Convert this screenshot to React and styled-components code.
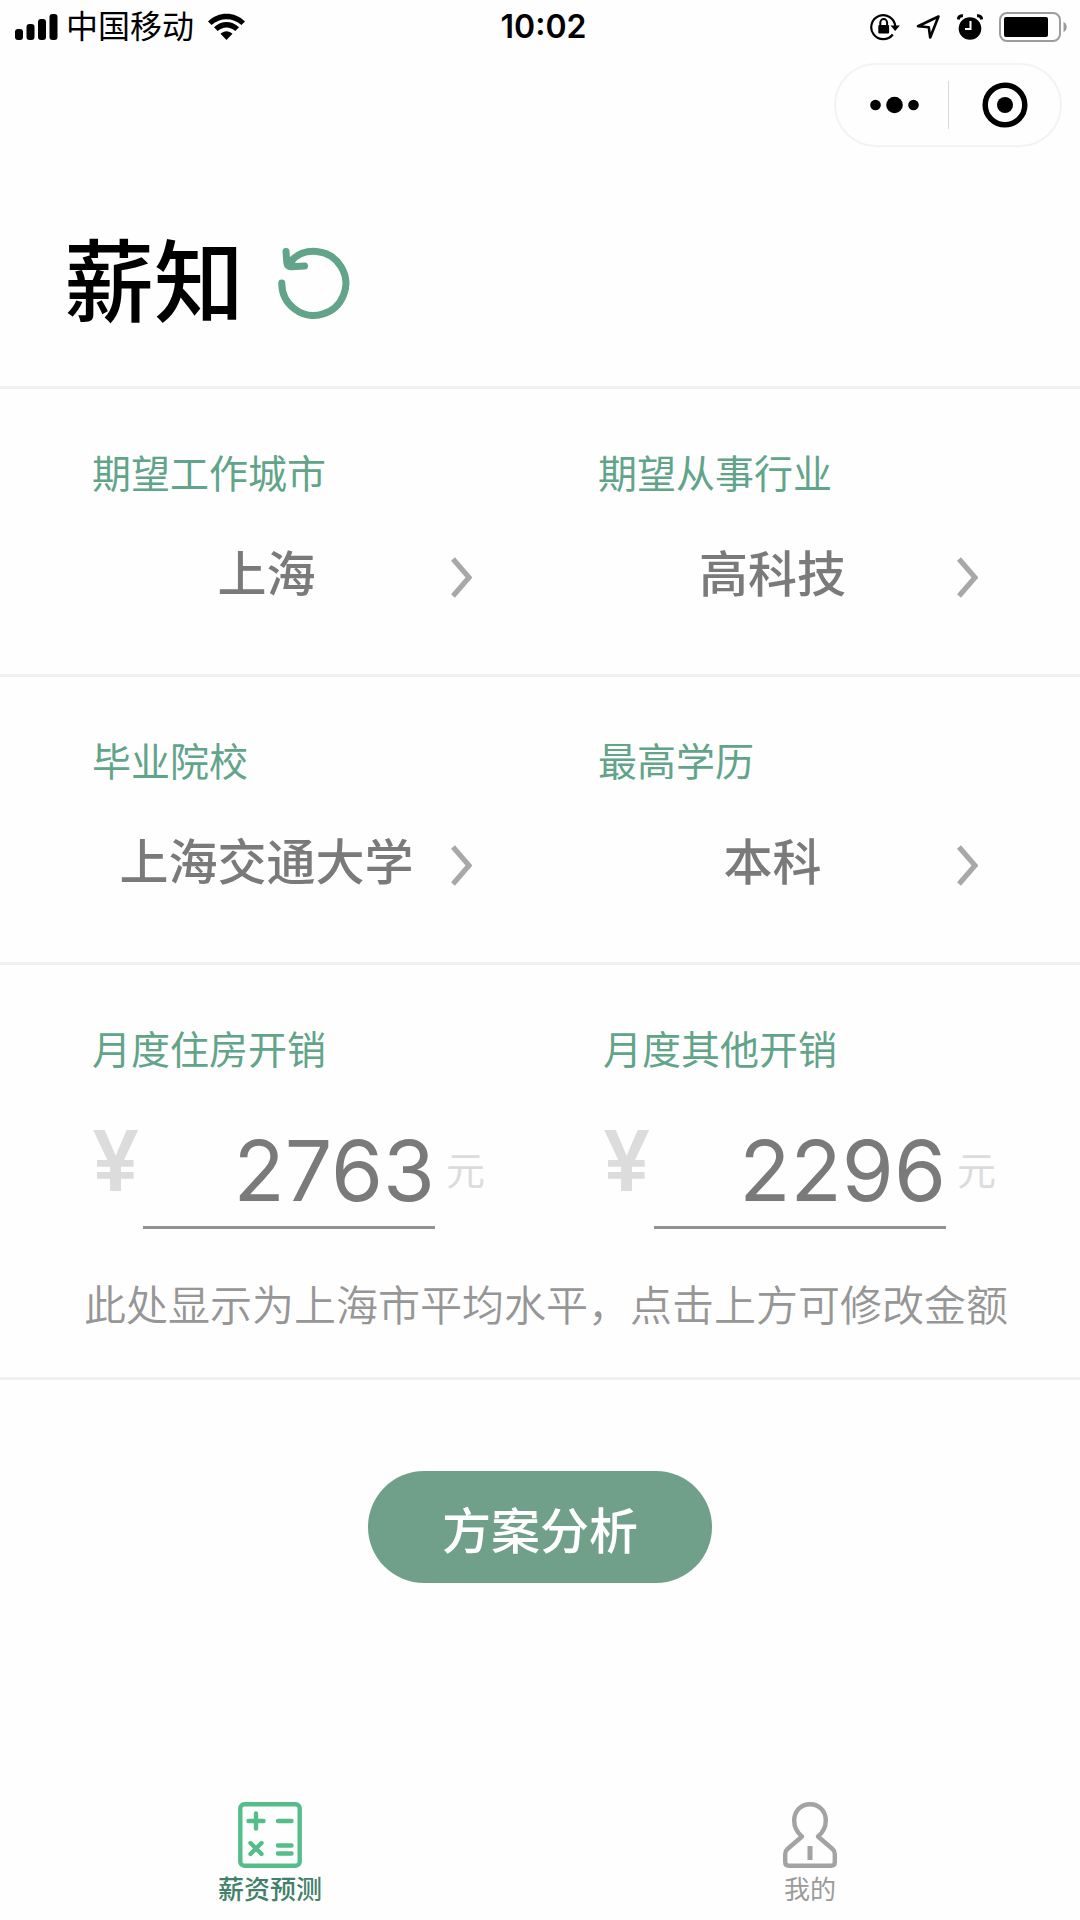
import { useState } from "react";
import styled, { createGlobalStyle } from "styled-components";

const GlobalStyle = createGlobalStyle`
  * {
    box-sizing: border-box;
  }
  body {
    margin: 0;
    background: #fefefe;
    font-family: "Inter", "Noto Sans CJK SC", sans-serif;
  }
  button, input, select {
    margin: 0;
    padding: 0;
    border: none;
    background: none;
    font-family: inherit;
    color: inherit;
  }
  svg {
    display: block;
    flex-shrink: 0;
  }
`;

const Page = styled.div`
  min-height: 100vh;
  display: flex;
  flex-direction: column;
`;

const StatusBar = styled.div`
  display: grid;
  grid-template-columns: 1fr auto 1fr;
  align-items: center;
  height: 53px;
  padding: 0 12px 0 15px;
  color: #000;
`;

const StatusGroup = styled.div`
  display: flex;
  align-items: center;
  justify-content: ${({ $end }) => ($end ? "flex-end" : "flex-start")};
  gap: ${({ $end }) => ($end ? "16px" : "8px")};
`;

const Carrier = styled.span`
  font-size: 32px;
  line-height: 40px;
  margin-right: 6px;
`;

const Clock = styled.time`
  padding-left: 4px;
  font-size: 32px;
  font-weight: 600;
  line-height: 40px;
`;

const CapsuleRow = styled.div`
  display: flex;
  justify-content: flex-end;
  padding: 10px 18px 0;
`;

const Capsule = styled.div`
  display: flex;
  align-items: center;
  width: 228px;
  height: 84px;
  border: 2px solid #f3f3f3;
  border-radius: 42px;
`;

const CapsuleButton = styled.button`
  flex: 1;
  display: flex;
  justify-content: center;
`;

const CapsuleDivider = styled.span`
  width: 1px;
  height: 48px;
  background: #d8d8d8;
`;

const Header = styled.header`
  display: flex;
  align-items: center;
  gap: 34px;
  padding: 86px 64px 53px;
  border-bottom: 3px solid #f0f0f0;
`;

const Title = styled.h1`
  margin: 0;
  font-size: 90px;
  font-weight: 500;
  line-height: 100px;
  color: #000;
`;

const ResetButton = styled.button``;

const Section = styled.section`
  padding: 60px 0 ${({ $tight }) => ($tight ? "46px" : "65px")};
  border-bottom: 3px solid #f0f0f0;
`;

const PickerGrid = styled.div`
  display: grid;
  grid-template-columns: repeat(2, minmax(0, 1fr));
  gap: 126px;
  padding: 0 102px 0 92px;
`;

const MoneyGrid = styled(PickerGrid)`
  gap: 115px;
  padding: 0 81px 0 92px;
`;

const Label = styled.label`
  display: block;
  margin-bottom: 40px;
  font-size: 39px;
  font-weight: 400;
  line-height: 50px;
  color: #62a48a;
`;

const PickerRow = styled.div`
  display: flex;
  align-items: flex-end;
  gap: 10px;
`;

const Picker = styled.select`
  flex: 1;
  min-width: 0;
  height: 70px;
  appearance: none;
  font-size: 49px;
  font-weight: 500;
  text-align-last: center;
  color: #7a7a7a;
`;

const MoneyRow = styled.div`
  display: flex;
  align-items: flex-start;
`;

const Yen = styled.span`
  width: 51px;
  font-size: 84px;
  font-weight: 600;
  line-height: 92px;
  color: #dcdcdc;
`;

const Amount = styled.input`
  flex: 1;
  min-width: 0;
  height: 114px;
  border-bottom: 3px solid #8f9391;
  font-size: 84px;
  text-align: right;
  color: #7a7a7a;
  outline: none;
`;

const Unit = styled.span`
  width: 42px;
  margin-left: 11px;
  font-size: 39px;
  line-height: 112px;
  color: #dcdcdc;
`;

const Hint = styled.p`
  margin: 52px 0 0;
  padding: 0 64px 0 84px;
  font-size: 42px;
  font-weight: 350;
  line-height: 50px;
  color: #969696;
`;

const SubmitButton = styled.button`
  align-self: center;
  width: 344px;
  height: 112px;
  margin: 91px 0;
  border-radius: 56px;
  background: #709f8a;
  font-size: 49px;
  font-weight: 500;
  color: #fff;
`;

const TabBar = styled.nav`
  display: grid;
  grid-template-columns: 1fr 1fr;
  margin-top: auto;
  padding-bottom: 12px;
`;

const Tab = styled.a`
  display: flex;
  flex-direction: column;
  align-items: center;
  gap: 4px;
  font-size: 26px;
  font-weight: ${({ $active }) => ($active ? 500 : 400)};
  line-height: 36px;
  color: ${({ $active }) => ($active ? "#438069" : "#9b9b9b")};
  text-decoration: none;
`;

const SignalIcon = () => (
  <svg width="43" height="28" viewBox="0 0 43 28">
    <rect x="0" y="16" width="8" height="11" rx="3" />
    <rect x="11.5" y="11" width="8" height="16" rx="3" />
    <rect x="23" y="6" width="8" height="21" rx="3" />
    <rect x="34.5" y="1" width="8" height="26" rx="3" />
  </svg>
);

const WifiIcon = () => (
  <svg width="37" height="28" viewBox="0 0 37 28">
    <path d="M0 8.5C10.500-1.800 26.500-1.800 37 8.500L33.400 12C25 4.200 12 4.200 3.600 12Z" />
    <path d="M6 14.300C13.500 7.200 23.500 7.200 31 14.300L27.300 18C22 13.200 15 13.200 9.700 18Z" />
    <path d="M12.500 20.800C16 17.400 21 17.400 24.500 20.800L18.500 27Z" />
  </svg>
);

const RotationLockIcon = () => (
  <svg width="30" height="28" viewBox="0 0 30 28">
    <path
      d="M22.800 21.500A12 12 0 1 1 25.200 13"
      fill="none"
      stroke="#000"
      strokeWidth="2.200"
    />
    <path d="M20.500 12.500H29.800L25.200 18Z" />
    <rect x="8.300" y="12" width="10.800" height="8.500" rx="1" />
    <path
      d="M10.300 12V9.500A3.400 3.400 0 0 1 17.100 9.500V12"
      fill="none"
      stroke="#000"
      strokeWidth="2"
    />
  </svg>
);

const LocationIcon = () => (
  <svg width="25" height="26" viewBox="0 0 25 26">
    <path
      d="M22.500 2.500L2 12.200L12.800 13.200L14.200 23.500Z"
      fill="none"
      stroke="#000"
      strokeWidth="2.600"
      strokeLinejoin="round"
    />
  </svg>
);

const AlarmIcon = () => (
  <svg width="26" height="26" viewBox="0 0 26 26">
    <circle cx="13" cy="14.500" r="11.300" />
    <path
      d="M1.200 5.500C1.500 3 3.500 1.600 6 1.800M20 1.800C22.500 1.600 24.500 3 24.800 5.500"
      fill="none"
      stroke="#000"
      strokeWidth="3"
    />
    <path d="M13.500 7V15H8" fill="none" stroke="#fff" strokeWidth="2" />
  </svg>
);

const BatteryIcon = () => (
  <svg width="69" height="30" viewBox="0 0 69 30">
    <rect
      x="1"
      y="1"
      width="60"
      height="28"
      rx="7"
      fill="none"
      stroke="#9c9c9c"
      strokeWidth="2"
    />
    <rect x="5" y="5" width="44" height="20" rx="2" />
    <path d="M64.500 10C68.800 11.500 68.800 18.500 64.500 20Z" fill="#9c9c9c" />
  </svg>
);

const MoreIcon = () => (
  <svg width="54" height="18" viewBox="0 0 54 18">
    <circle cx="10.500" cy="9" r="5.300" />
    <circle cx="29.500" cy="9" r="8.300" />
    <circle cx="48.500" cy="9" r="5.300" />
  </svg>
);

const CloseIcon = () => (
  <svg width="48" height="46" viewBox="-2 0 48 46">
    <circle
      cx="23"
      cy="23"
      r="19.800"
      fill="none"
      stroke="#000"
      strokeWidth="5.500"
    />
    <circle cx="23" cy="23" r="8" />
  </svg>
);

const ResetIcon = () => (
  <svg
    width="72"
    height="72"
    viewBox="0 0 72 72"
    fill="none"
    stroke="#62a48a"
    strokeWidth="7"
    strokeLinecap="round"
    strokeLinejoin="round"
  >
    <path d="M3.800 36A32 32 0 1 0 12 15" />
    <path d="M8 4.500L8.800 15.500Q9.200 20 13.500 19.800L26.500 19" />
    <path d="M10 13L17 11L15 18Z" fill="#62a48a" strokeWidth="3" />
  </svg>
);

const ChevronIcon = () => (
  <svg width="21" height="62" viewBox="0 0 21 62">
    <path
      d="M2 12L18 30.500L2 49"
      fill="none"
      stroke="#a8a8a8"
      strokeWidth="5.200"
    />
  </svg>
);

const CalculatorIcon = () => (
  <svg
    width="64"
    height="66"
    viewBox="0 0 64 66"
    fill="none"
    stroke="#55bd8a"
    strokeWidth="4.400"
    strokeLinecap="round"
  >
    <rect x="2.300" y="2.300" width="59.400" height="61.400" rx="4" />
    <path d="M10.500 19H25.500M18 11.500V26.500" />
    <path d="M40 19H53.500M40 43.500H53.500M40 51.500H53.500" />
    <path d="M12.500 41L23.500 52M23.500 41L12.500 52" />
  </svg>
);

const PersonIcon = () => (
  <svg
    width="54"
    height="66"
    viewBox="0 0 54 66"
    fill="none"
    stroke="#a3a3a3"
    strokeWidth="4.400"
    strokeLinejoin="round"
  >
    <path d="M35 34.500L49.500 47Q51.800 49 51.800 52V60Q51.800 63.700 48 63.700H6Q2.200 63.700 2.200 60V52Q2.200 49 4.500 47L19 34.500C13.500 30 11.200 25 11.200 18.500C11.200 9 18 2.200 27 2.200S42.800 9 42.800 18.500C42.800 25 40.500 30 35 34.500Z" />
    <path d="M27 44V58" strokeWidth="5" />
  </svg>
);

const PickerField = ({ id, label, options }) => {
  const [value, setValue] = useState(options[0]);

  return (
    <div>
      <Label htmlFor={id}>{label}</Label>
      <PickerRow>
        <Picker
          id={id}
          value={value}
          onChange={(e) => setValue(e.target.value)}
        >
          {options.map((option) => (
            <option key={option}>{option}</option>
          ))}
        </Picker>
        <ChevronIcon />
      </PickerRow>
    </div>
  );
};

const MoneyField = ({ id, label, value, onChange }) => (
  <div>
    <Label htmlFor={id}>{label}</Label>
    <MoneyRow>
      <Yen>¥</Yen>
      <Amount
        id={id}
        inputMode="numeric"
        value={value}
        onChange={(e) => onChange(e.target.value)}
      />
      <Unit>元</Unit>
    </MoneyRow>
  </div>
);

const App = () => {
  const [housing, setHousing] = useState("2763");
  const [other, setOther] = useState("2296");

  const handleReset = () => {
    setHousing("2763");
    setOther("2296");
  };

  return (
    <Page>
      <GlobalStyle />
      <StatusBar>
        <StatusGroup>
          <SignalIcon />
          <Carrier>中国移动</Carrier>
          <WifiIcon />
        </StatusGroup>
        <Clock>10:02</Clock>
        <StatusGroup $end>
          <RotationLockIcon />
          <LocationIcon />
          <AlarmIcon />
          <BatteryIcon />
        </StatusGroup>
      </StatusBar>
      <CapsuleRow>
        <Capsule>
          <CapsuleButton aria-label="更多">
            <MoreIcon />
          </CapsuleButton>
          <CapsuleDivider />
          <CapsuleButton aria-label="关闭">
            <CloseIcon />
          </CapsuleButton>
        </Capsule>
      </CapsuleRow>

      <Header>
        <Title>薪知</Title>
        <ResetButton aria-label="重置" onClick={handleReset}>
          <ResetIcon />
        </ResetButton>
      </Header>

      <Section>
        <PickerGrid>
          <PickerField
            id="city"
            label="期望工作城市"
            options={["上海", "北京", "深圳"]}
          />
          <PickerField
            id="industry"
            label="期望从事行业"
            options={["高科技", "金融", "教育"]}
          />
        </PickerGrid>
      </Section>

      <Section>
        <PickerGrid>
          <PickerField
            id="school"
            label="毕业院校"
            options={["上海交通大学", "复旦大学", "同济大学"]}
          />
          <PickerField
            id="degree"
            label="最高学历"
            options={["本科", "硕士", "博士"]}
          />
        </PickerGrid>
      </Section>

      <Section $tight>
        <MoneyGrid>
          <MoneyField
            id="housing"
            label="月度住房开销"
            value={housing}
            onChange={setHousing}
          />
          <MoneyField
            id="other"
            label="月度其他开销"
            value={other}
            onChange={setOther}
          />
        </MoneyGrid>
        <Hint>此处显示为上海市平均水平，点击上方可修改金额</Hint>
      </Section>

      <SubmitButton>方案分析</SubmitButton>

      <TabBar>
        <Tab href="#forecast" $active>
          <CalculatorIcon />
          薪资预测
        </Tab>
        <Tab href="#mine">
          <PersonIcon />
          我的
        </Tab>
      </TabBar>
    </Page>
  );
};

export default App;
